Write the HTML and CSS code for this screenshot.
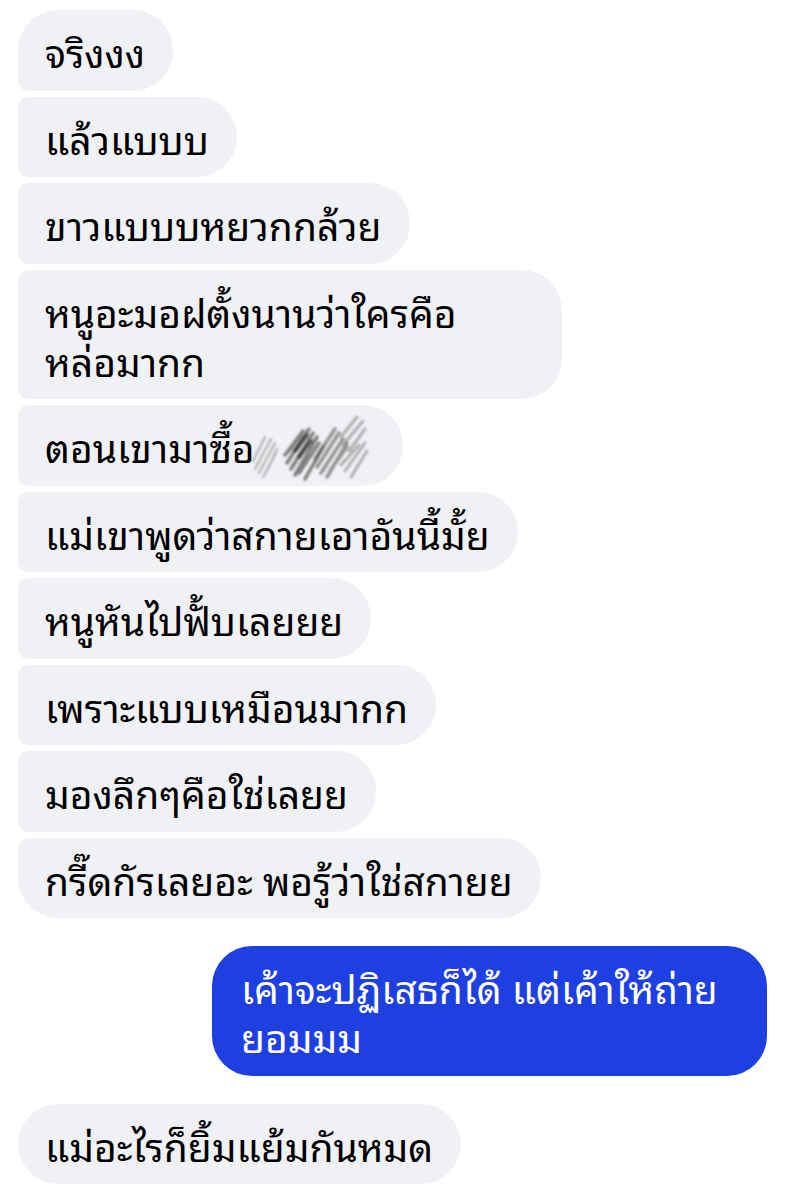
FILE: index.html
```html
<!DOCTYPE html>
<html lang="th">
<head>
<meta charset="utf-8">
<link rel="stylesheet" href="styles.css">
</head>
<body>
<div class="chat">
  <div class="group left">
    <div class="bubble first">จริงงง</div>
    <div class="bubble">แล้วแบบบ</div>
    <div class="bubble">ขาวแบบบหยวกกล้วย</div>
    <div class="bubble wide">หนูอะมอฝตั้งนานว่าใครคือ<br>หล่อมากก</div>
    <div class="bubble">ตอนเขามาซื้อ<span class="scribble"><svg width="124" height="72" viewBox="0 0 124 72"><defs><filter id="f" x="-20%" y="-20%" width="140%" height="140%"><feGaussianBlur stdDeviation="1.3"/></filter></defs><g filter="url(#f)" stroke-linecap="round" fill="none"><path d="M2 50 L14 26 M4 58 L20 28 M8 62 L24 32 M12 66 L24 44 M16 60 L26 38" stroke="#888" stroke-width="2.5" opacity=".55"/><path d="M34 44 L52 20 M36 52 L58 18 M40 58 L62 22 M44 64 L66 26 M48 62 L68 32 M54 68 L72 36 M38 40 L50 24" stroke="#444" stroke-width="3.5" opacity=".65"/><path d="M44 40 L56 24 M48 46 L60 30" stroke="#111" stroke-width="4" opacity=".6"/><path d="M64 48 L84 18 M66 56 L88 22 M70 62 L92 28 M76 66 L96 32 M80 58 L96 36" stroke="#555" stroke-width="3.5" opacity=".6"/><path d="M90 26 L106 6 M92 34 L112 10 M98 40 L114 18 M94 60 L114 32 M100 66 L116 40 M90 54 L108 34" stroke="#777" stroke-width="3" opacity=".55"/></g></svg></span></div>
    <div class="bubble">แม่เขาพูดว่าสกายเอาอันนี้มั้ย</div>
    <div class="bubble">หนูหันไปฟั้บเลยยย</div>
    <div class="bubble">เพราะแบบเหมือนมากก</div>
    <div class="bubble">มองลึกๆคือใช่เลยย</div>
    <div class="bubble last">กรี๊ดกัรเลยอะ พอรู้ว่าใช่สกายย</div>
  </div>
  <div class="group right">
    <div class="bubble me single">เค้าจะปฏิเสธก็ได้ แต่เค้าให้ถ่าย<br>ยอมมม</div>
  </div>
  <div class="group left">
    <div class="bubble single">แม่อะไรก็ยิ้มแย้มกันหมด</div>
  </div>
</div>
</body>
</html>
```
FILE: styles.css
```css
html, body {
  margin: 0;
  padding: 0;
  background: #ffffff;
}
body {
  font-family: "Noto Sans Thai Looped", "Noto Sans Thai", "Noto Sans", sans-serif;
  color: #000;
}
.chat {
  display: flex;
  flex-direction: column;
  gap: 28px;
  padding: 10px 19px 0 18px;
}
.group {
  display: flex;
  flex-direction: column;
  gap: 6px;
}
.group.left { align-items: flex-start; }
.group.right { align-items: flex-end; }
.bubble {
  background: #f0f1f4;
  font-size: 39px;
  line-height: 49px;
  padding: 16px 28px 15.5px 27px;
  border-radius: 10px 40px 40px 10px;
  display: flex;
  align-items: center;
  white-space: nowrap;
}
.bubble.first { border-radius: 40px 40px 40px 10px; }
.bubble.last { border-radius: 10px 40px 40px 40px; }
.bubble.single { border-radius: 40px; }
.bubble.me {
  background: #1f40e1;
  color: #fff;
  width: 555px;
  box-sizing: border-box;
  display: block;
  padding-left: 29px;
}
.bubble.wide { width: 544px; box-sizing: border-box; display: block; }
.scribble {
  display: inline-block;
  width: 120px;
  height: 49px;
  position: relative;
}
.scribble svg {
  position: absolute;
  left: -4px;
  top: -10px;
}
```
